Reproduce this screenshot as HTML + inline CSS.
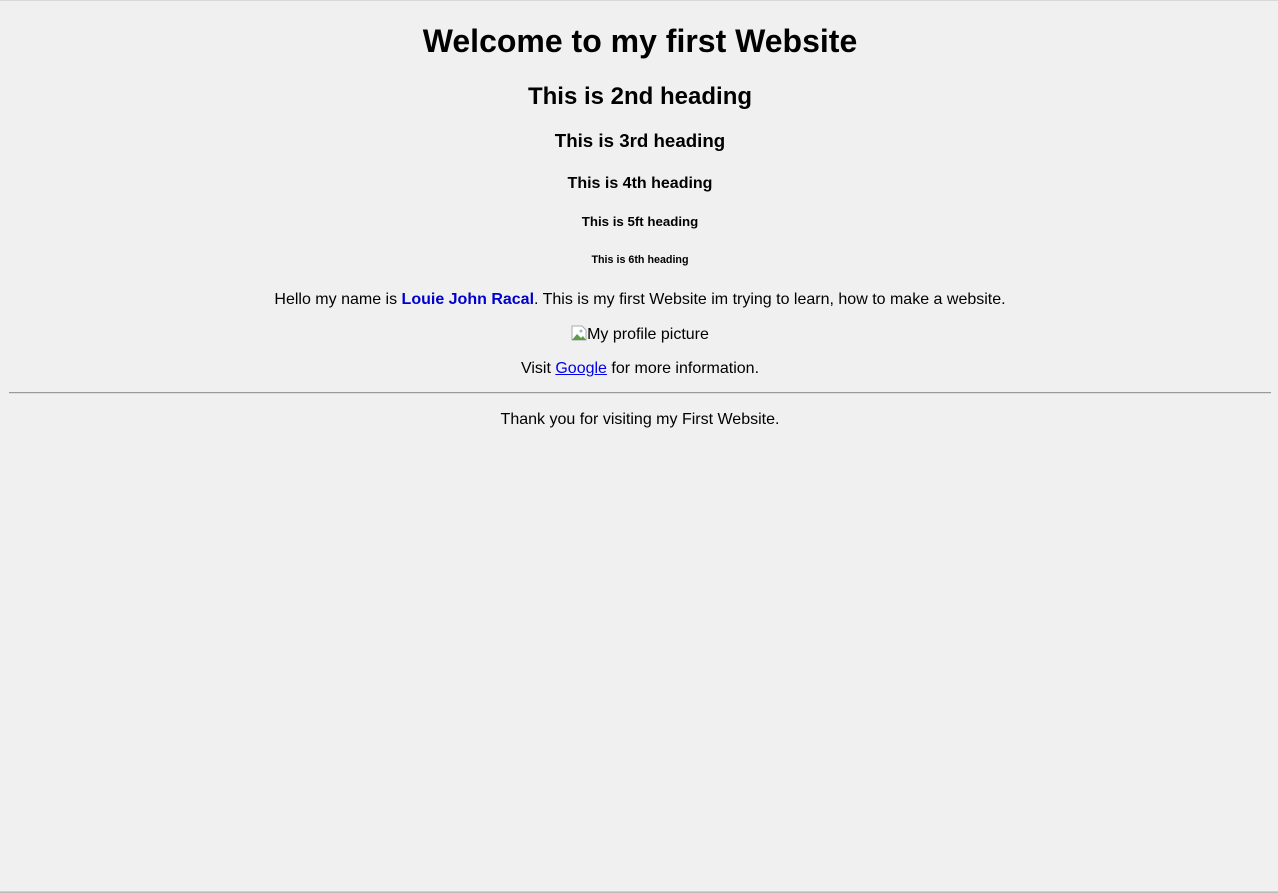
<!DOCTYPE html>
<html><head><meta charset="utf-8"><style>
html,body{margin:0;padding:0;}
body{background:#f0f0f0;font-family:"Liberation Sans",Arial,sans-serif;color:#000;text-align:center;height:893px;box-sizing:border-box;border-top:1px solid #d8d8d8;position:relative;overflow:hidden;}
.wrap{margin:0 7px 0 9px;padding-top:0;}
h1{font-size:32px;margin:22px 0 23px;}
h2{font-size:24px;margin:20px 0 18px;}
h3{font-size:18.72px;margin:18.7px 0;}
h4{font-size:16px;margin:23.3px 0 21.3px;}
h5{font-size:13.28px;margin:21.2px 0 23.2px;}
h6{font-size:10.72px;margin:25px 0;}
p{font-size:16px;margin:16px 0;}
p.g{margin-bottom:14px;}
p.t{margin-top:17px;}
b.n{color:#0000cd;}
a{color:#0000ee;}
hr{border:0;border-top:1px solid #999;border-bottom:1px solid #ddd;margin:8px 0;}
.bot{position:absolute;left:0;right:0;top:890px;height:1px;background:#bbb;border-top:1px solid #d0d0d0;}
</style></head><body><div class="wrap">
<h1>Welcome to my first Website</h1>
<h2>This is 2nd heading</h2>
<h3>This is 3rd heading</h3>
<h4>This is 4th heading</h4>
<h5>This is 5ft heading</h5>
<h6>This is 6th heading</h6>
<p>Hello my name is <b class="n">Louie John Racal</b>. This is my first Website im trying to learn, how to make a website.</p>
<p><svg width="16" height="16" viewBox="0 0 16 16" style="vertical-align:-2px"><path d="M1 1h10l4 4v10H1z" fill="#fff" stroke="#aaa"/><path d="M1 15l5-6 4 4 2-2 3 4z" fill="#5a9e4a"/><circle cx="10" cy="6" r="1.5" fill="#8bc"/></svg>My profile picture</p>
<p class="g">Visit <a href="#">Google</a> for more information.</p>
<hr>
<p class="t">Thank you for visiting my First Website.</p>
</div><div class="bot"></div></body></html>
